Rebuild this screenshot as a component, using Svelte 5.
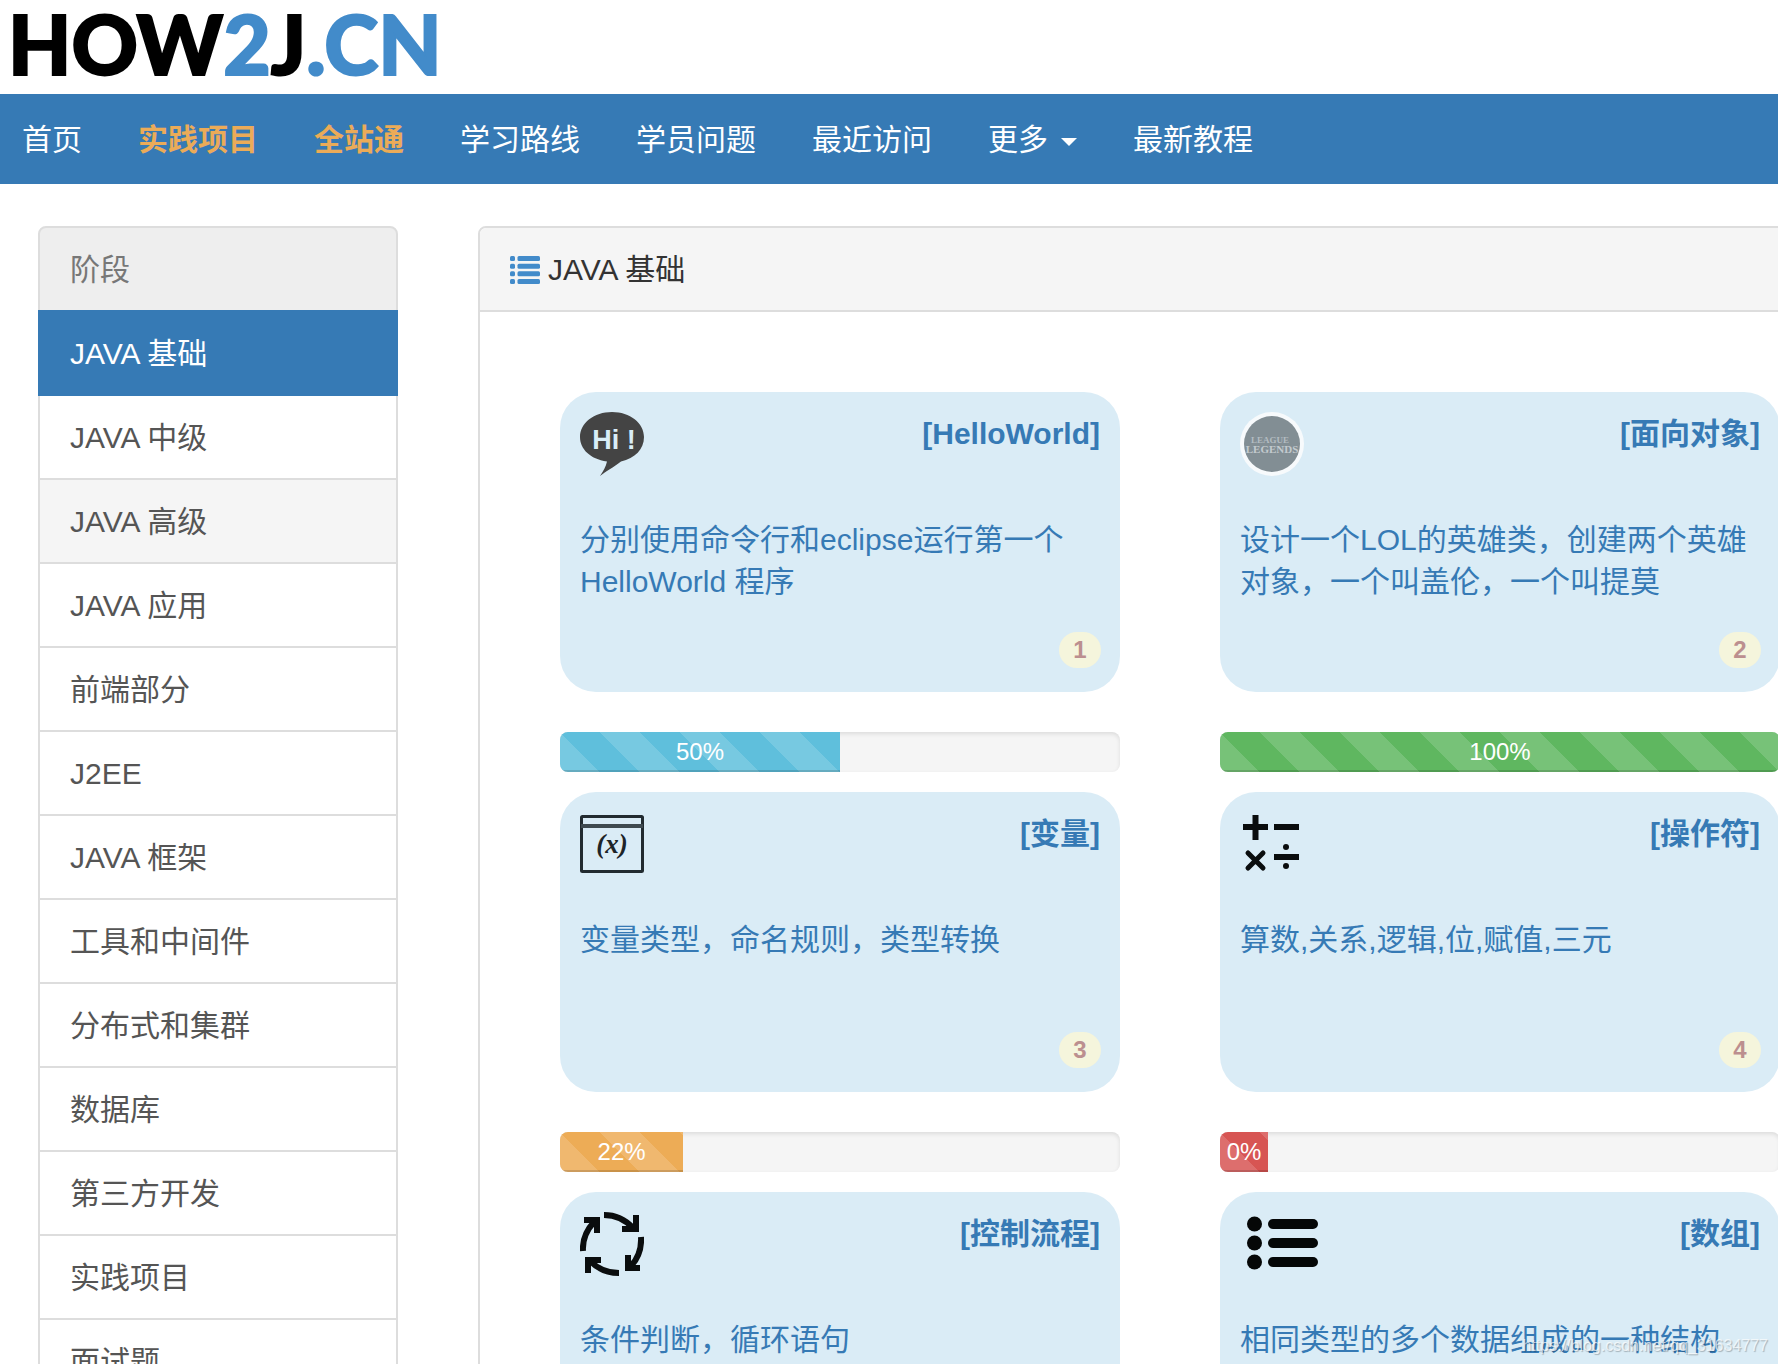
<script>
  const navItems = [
    { label: '首页' },
    { label: '实践项目', hot: true },
    { label: '全站通', hot: true },
    { label: '学习路线' },
    { label: '学员问题' },
    { label: '最近访问' },
    { label: '更多', caret: true },
    { label: '最新教程' }
  ];

  const stages = [
    { label: 'JAVA 基础', state: 'active' },
    { label: 'JAVA 中级' },
    { label: 'JAVA 高级', state: 'hovered' },
    { label: 'JAVA 应用' },
    { label: '前端部分' },
    { label: 'J2EE' },
    { label: 'JAVA 框架' },
    { label: '工具和中间件' },
    { label: '分布式和集群' },
    { label: '数据库' },
    { label: '第三方开发' },
    { label: '实践项目' },
    { label: '面试题' }
  ];

  const lessons = [
    { icon: 'hi', title: 'HelloWorld', text: '分别使用命令行和eclipse运行第一个 HelloWorld 程序', percent: 50, tone: 'info' },
    { icon: 'lol', title: '面向对象', text: '设计一个LOL的英雄类，创建两个英雄对象，一个叫盖伦，一个叫提莫', percent: 100, tone: 'success' },
    { icon: 'variable', title: '变量', text: '变量类型，命名规则，类型转换', percent: 22, tone: 'warning' },
    { icon: 'operators', title: '操作符', text: '算数,关系,逻辑,位,赋值,三元', percent: 0, tone: 'danger' },
    { icon: 'cycle', title: '控制流程', text: '条件判断，循环语句', percent: 0, tone: 'danger' },
    { icon: 'array', title: '数组', text: '相同类型的多个数据组成的一种结构', percent: 0, tone: 'danger' }
  ];
</script>

<div class="page">
  <header class="masthead">
    <a class="logo" href="#home">HOW<span>2</span>J<span>.CN</span></a>
  </header>

  <nav class="navbar" aria-label="主导航">
    {#each navItems as item}
      <a class="nav-link" class:hot={item.hot} href="#nav">
        {item.label}{#if item.caret}<span class="caret"></span>{/if}
      </a>
    {/each}
  </nav>

  <div class="content">
    <aside class="stages">
      <h2 class="stage heading">阶段</h2>
      {#each stages as stage}
        <a class="stage {stage.state ?? ''}" href="#stage">{stage.label}</a>
      {/each}
    </aside>

    <main class="panel">
      <h1 class="panel-title">
        <svg class="list-icon" viewBox="0 0 30 28" width="30" height="28" aria-hidden="true">
          {#each [0, 7.7, 15.3, 23] as y}
            <rect x="0" {y} width="5" height="5" rx="1.5" />
            <rect x="7.5" {y} width="22.5" height="5" rx="1.5" />
          {/each}
        </svg>
        JAVA 基础
      </h1>

      <div class="lessons">
        {#each lessons as lesson, i}
          <section class="lesson">
            <a class="card" href="#lesson">
              <div class="card-top">
                {#if lesson.icon === 'hi'}
                  <svg class="icon" viewBox="0 0 64 64" width="64" height="64" aria-hidden="true">
                    <path d="M32 0C14 0 0 11 0 25c0 12 10 22 27 24.500-1 5-4 10-7 14.500 5-4 14-9 21-14.500 14-3 23-12.500 23-24.500C64 11 50 0 32 0Z" fill="#444" />
                    <text class="hi" x="34" y="37" text-anchor="middle">Hi !</text>
                  </svg>
                {:else if lesson.icon === 'lol'}
                  <svg class="icon" viewBox="0 0 64 64" width="64" height="64" aria-hidden="true">
                    <circle cx="32" cy="32" r="32" fill="#f7fafc" />
                    <circle cx="32" cy="32" r="28" fill="#828e94" />
                    <text class="lol-small" x="30" y="31" text-anchor="middle">LEAGUE</text>
                    <text class="lol-big" x="32" y="41" text-anchor="middle">LEGENDS</text>
                  </svg>
                {:else if lesson.icon === 'variable'}
                  <svg class="icon" viewBox="0 0 64 64" width="64" height="64" aria-hidden="true">
                    <rect x="1.5" y="4.5" width="61" height="55" rx="1" fill="none" stroke="#222b30" stroke-width="3" />
                    <path d="M1 14H63" stroke="#3f4a50" stroke-width="4" />
                    <text class="var" x="32" y="41" text-anchor="middle">(x)</text>
                  </svg>
                {:else if lesson.icon === 'operators'}
                  <svg class="icon" viewBox="0 0 64 64" width="64" height="64" fill="none" stroke="#0a0d0e" aria-hidden="true">
                    <path d="M3 15H28M15.500 3V28M34 15H59M34 45H59" stroke-width="6" />
                    <path d="M8 41L23 56M23 41L8 56" stroke-width="5" stroke-linecap="round" />
                    <circle cx="46" cy="35" r="3" fill="#0a0d0e" stroke="none" />
                    <circle cx="46" cy="54" r="3" fill="#0a0d0e" stroke="none" />
                  </svg>
                {:else if lesson.icon === 'cycle'}
                  <svg class="icon" viewBox="0 0 64 64" width="64" height="64" fill="none" stroke="#0a0d0e" stroke-width="6" aria-hidden="true">
                    <path d="M24 3Q41 3 53 16M56 3V17H42" />
                    <path d="M3 39Q2 23 14 10M4 8H17V21" />
                    <path d="M61 25Q62 42 51 54M48 43V56H60" />
                    <path d="M39 61Q22 61 10 49M8 61V48H21" />
                  </svg>
                {:else}
                  <svg class="icon" viewBox="0 0 80 64" width="80" height="64" fill="#050707" aria-hidden="true">
                    {#each [12, 31, 50] as y}
                      <circle cx="14.500" cy={y} r="7.500" />
                      <rect x="28" y={y - 5} width="50" height="10" rx="5" />
                    {/each}
                  </svg>
                {/if}
                <h3 class="card-title">[{lesson.title}]</h3>
              </div>
              <p class="card-text">{lesson.text}</p>
              <span class="badge">{i + 1}</span>
            </a>
            <div class="track" role="progressbar" aria-label={lesson.title} aria-valuenow={lesson.percent} aria-valuemin="0" aria-valuemax="100">
              <div class="bar {lesson.tone}" style="width: {lesson.percent}%">{lesson.percent}%</div>
            </div>
          </section>
        {/each}
      </div>
    </main>
  </div>

  <span class="watermark">https://blog.csdn.net/qq_31634777</span>
</div>

<style>
  :global(body) {
    margin: 0;
    background: #fff;
  }

  .page {
    position: relative;
    height: 100vh;
    overflow: hidden;
    color: #333;
    font: 30px/42px 'Liberation Sans', 'Noto Sans CJK SC', sans-serif;
  }

  a {
    text-decoration: none;
  }

  h1, h2, h3, p {
    margin: 0;
    font-size: inherit;
    font-weight: normal;
  }

  .masthead {
    display: flex;
    padding: 0 8px 8px;
  }

  .logo {
    color: #000;
    font: 900 82px/86px 'Lato Black', Lato, sans-serif;
    -webkit-text-stroke: 2px currentColor;
  }

  .logo span {
    color: #428bca;
  }

  .navbar {
    display: flex;
    gap: 56px;
    padding: 25px 22px 23px;
    background: #367ab5;
    white-space: nowrap;
  }

  .nav-link {
    display: flex;
    align-items: center;
    gap: 13px;
    color: #fff;
  }

  .nav-link.hot {
    color: #ebab58;
    font-weight: bold;
  }

  .caret {
    border: 8px solid transparent;
    border-top-color: #fff;
    border-bottom: 0;
    margin-top: 4px;
  }

  .content {
    display: flex;
    align-items: flex-start;
    gap: 80px;
    padding: 42px 0 0 38px;
    margin-right: -84px;
  }

  .stages {
    flex: none;
    width: 360px;
  }

  .stage {
    display: block;
    margin-bottom: -2px;
    padding: 21px 30px 19px;
    border: 2px solid #ddd;
    background: #fff;
    color: #555;
  }

  .heading {
    border-radius: 8px 8px 0 0;
    background: #eee;
    color: #777;
  }

  .hovered {
    background: #f5f5f5;
  }

  .active {
    position: relative;
    border-color: #367ab5;
    background: #367ab5;
    color: #fff;
  }

  .panel {
    flex: 1;
    min-width: 0;
    border: 2px solid #ddd;
    border-radius: 8px;
  }

  .panel-title {
    display: flex;
    align-items: center;
    gap: 8px;
    padding: 21px 30px 19px;
    border-bottom: 2px solid #ddd;
    border-radius: 6px 6px 0 0;
    background: #f5f5f5;
  }

  .list-icon {
    fill: #428bca;
  }

  .lessons {
    display: grid;
    grid-template-columns: 1fr 1fr;
    gap: 20px 100px;
    padding: 80px;
  }

  .card {
    position: relative;
    display: block;
    box-sizing: border-box;
    min-height: 300px;
    padding: 20px;
    border-radius: 36px;
    background: #daecf6;
    color: #367ab5;
  }

  .card-top {
    display: flex;
    justify-content: space-between;
    min-height: 64px;
    margin-bottom: 43px;
  }

  .icon {
    flex: none;
  }

  .card-title {
    font-weight: bold;
    line-height: 44px;
  }

  .badge {
    position: absolute;
    right: 19px;
    bottom: 24px;
    width: 42px;
    border-radius: 20px;
    background: beige;
    color: rosybrown;
    font-size: 24px;
    font-weight: bold;
    line-height: 36px;
    text-align: center;
  }

  .track {
    height: 40px;
    margin-top: 40px;
    overflow: hidden;
    border-radius: 8px;
    background: #f5f5f5;
    box-shadow: inset 0 2px 4px rgba(0, 0, 0, 0.1);
  }

  .bar {
    min-width: 48px;
    height: 40px;
    background-image: linear-gradient(45deg, rgba(255, 255, 255, 0.15) 25%, transparent 25%, transparent 50%, rgba(255, 255, 255, 0.15) 50%, rgba(255, 255, 255, 0.15) 75%, transparent 75%);
    background-position: 40px 0;
    background-size: 80px 80px;
    box-shadow: inset 0 -2px 0 rgba(0, 0, 0, 0.15);
    color: #fff;
    font-size: 24px;
    line-height: 40px;
    text-align: center;
  }

  .info {
    background-color: #5fbfdc;
  }

  .success {
    background-color: #5fb760;
  }

  .warning {
    background-color: #edac56;
  }

  .danger {
    background-color: #d75553;
  }

  .hi {
    fill: #d9edf7;
    font: bold 27px 'Liberation Sans', sans-serif;
  }

  .lol-small {
    fill: #b3bcc1;
    font: bold 9px 'Liberation Serif', serif;
  }

  .lol-big {
    fill: #c3cace;
    font: bold 11px 'Liberation Serif', serif;
  }

  .var {
    fill: #1d2428;
    font: italic bold 27px 'Liberation Serif', serif;
  }

  .watermark {
    position: absolute;
    right: 10px;
    bottom: 8px;
    color: rgba(255, 255, 255, 0.7);
    font-size: 16px;
    line-height: 20px;
    text-shadow: 1px 1px 1px rgba(0, 0, 0, 0.25);
  }
</style>
